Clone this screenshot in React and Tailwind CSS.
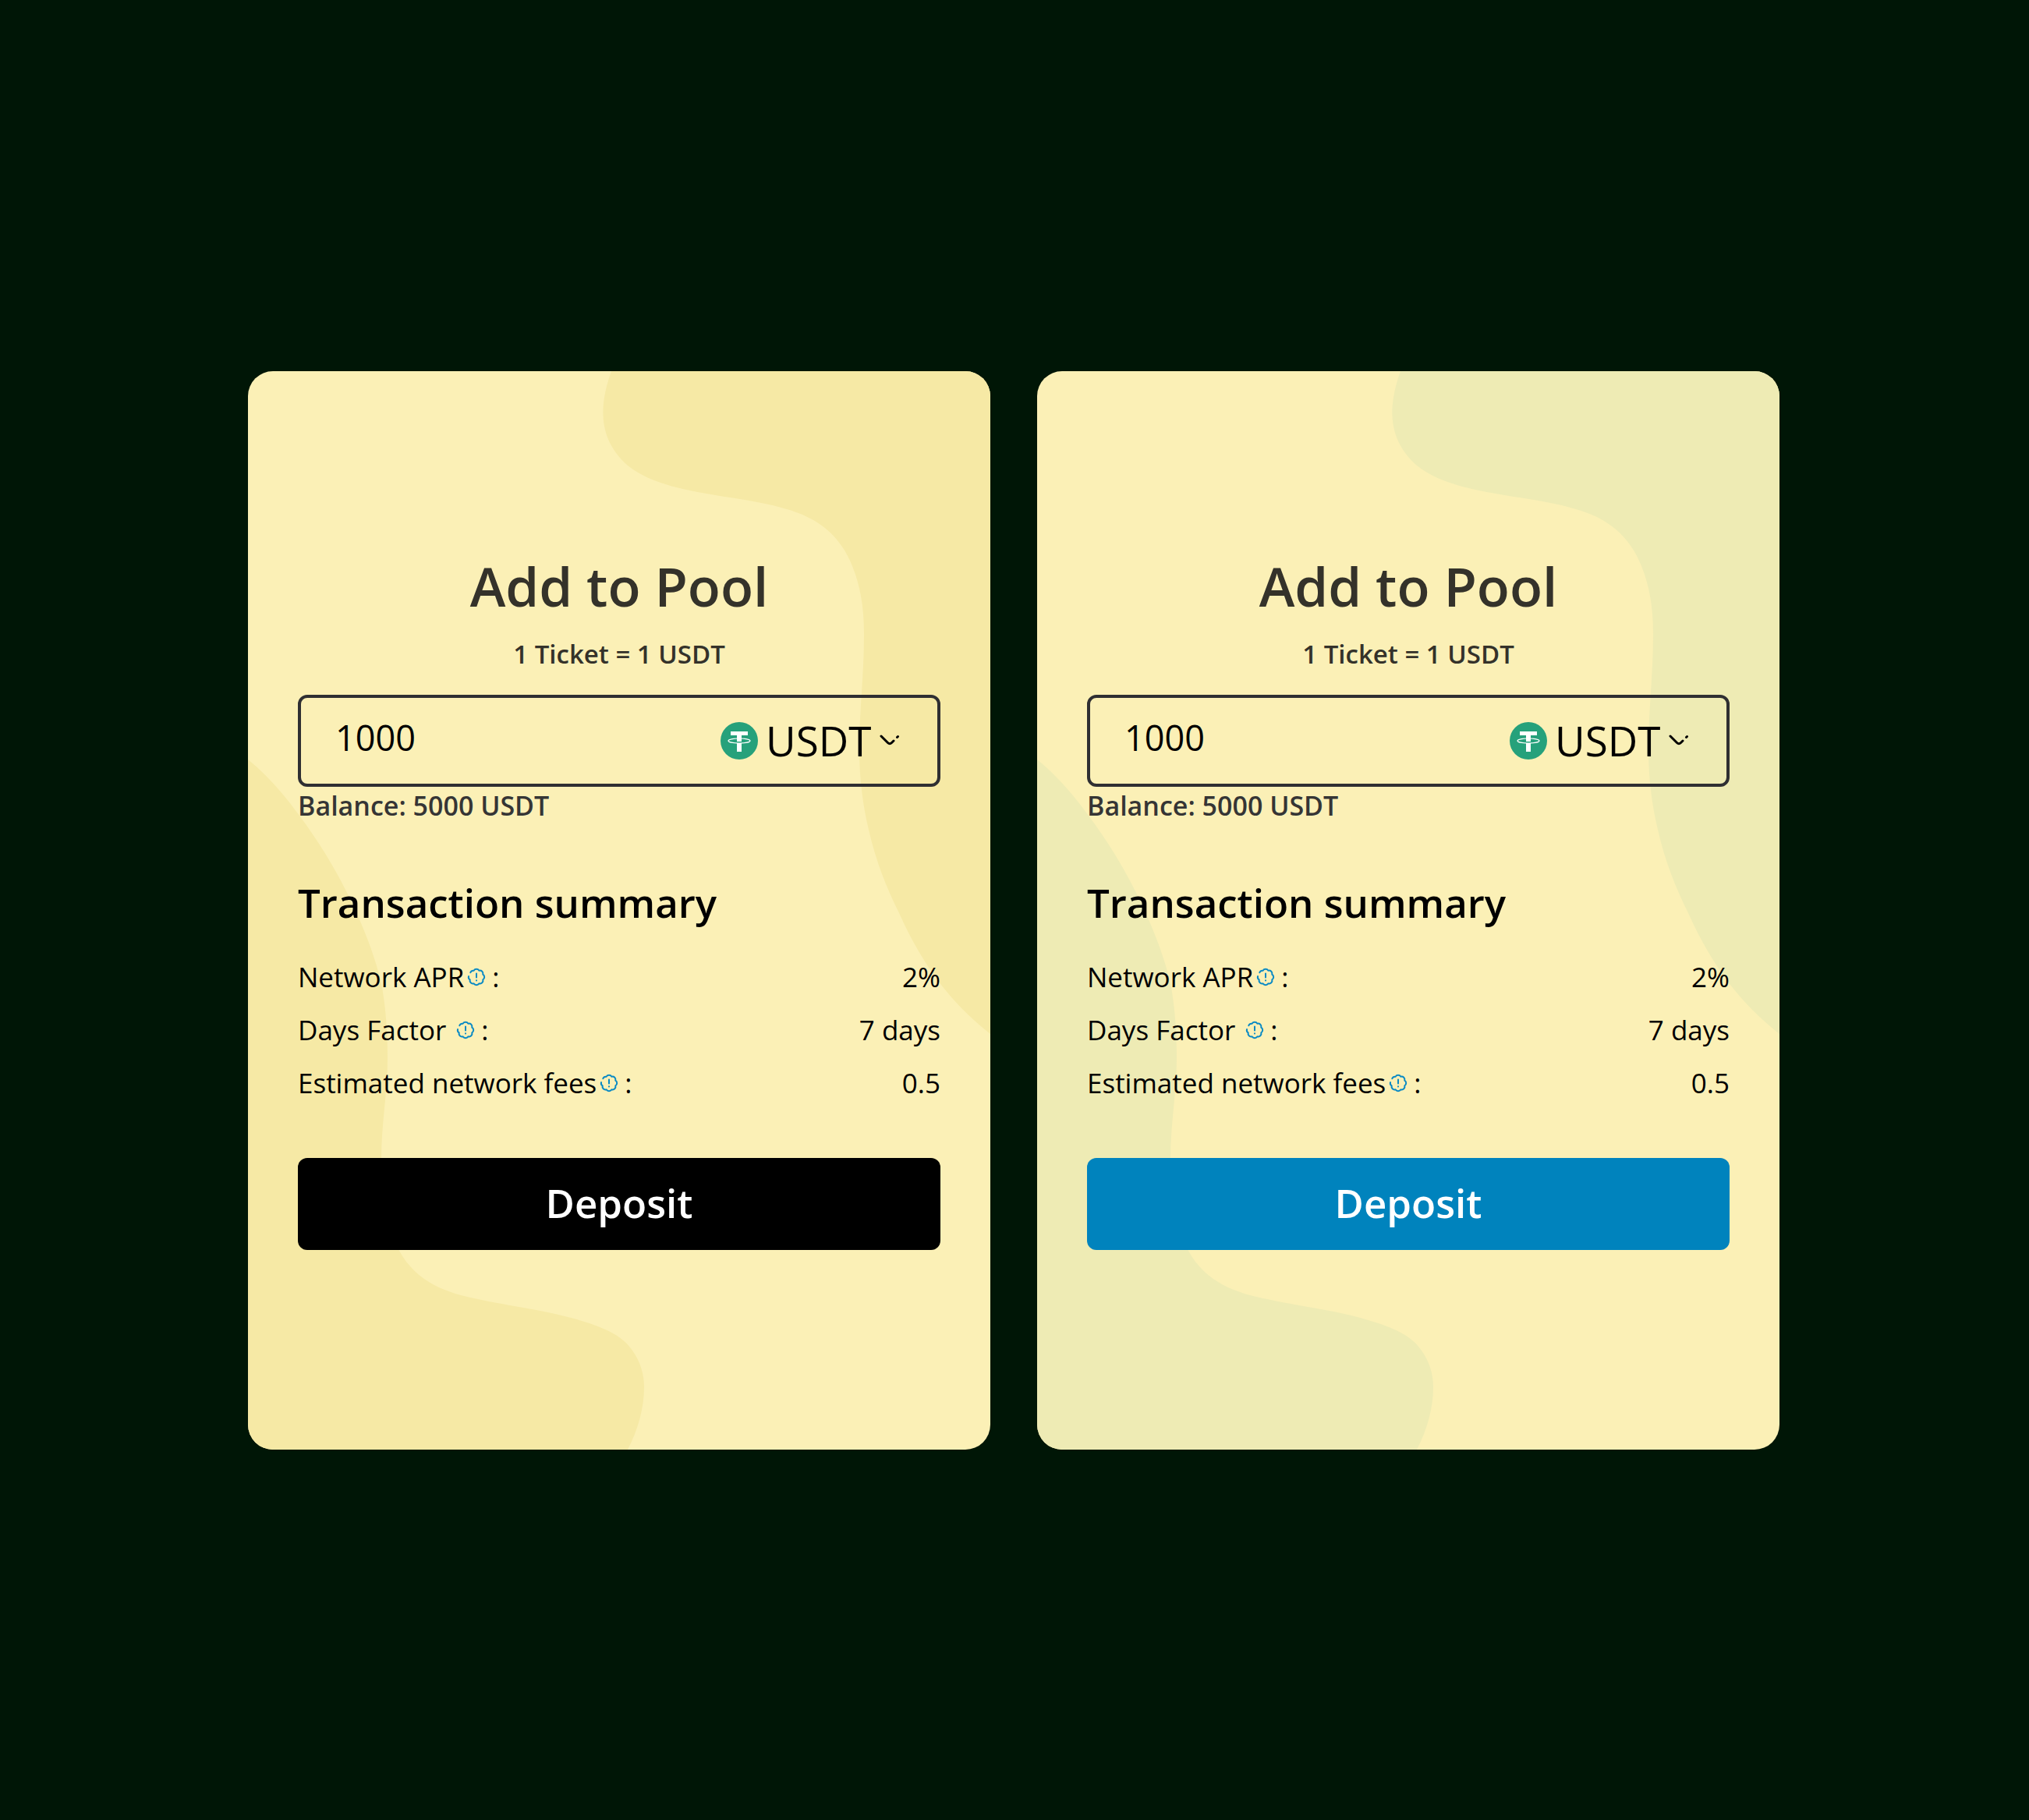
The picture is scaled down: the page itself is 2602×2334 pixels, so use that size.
import React, { useState } from 'react';

const themes = {
  gold: { blob: 'text-[#f6e9a5]', button: 'bg-black' },
  ocean: { blob: 'text-[#eeebb4]', button: 'bg-[#0083bd]' },
};

const summary = [
  { label: 'Network APR', value: '2%' },
  { label: 'Days Factor ', value: '7 days' },
  { label: 'Estimated network fees', value: '0.5' },
];

function Blobs({ className }) {
  return (
    <svg
      viewBox="0 0 952 1383"
      preserveAspectRatio="none"
      fill="currentColor"
      aria-hidden="true"
      className={`absolute inset-0 w-full h-full ${className}`}
    >
      <path d="M466 0C449 47 450 88 487 121C518 146 565 153 611 161C640 165 668 170 691 177C712 183 728 191 741 202C757 215 768 232 775 250C786 277 790 305 790 338C790 390 784 435 784 485C784 520 788 555 796 588C805 627 818 661 836 697C850 728 865 754 883 779C905 809 928 831 952 850V0Z" />
      <path d="M0 498C27 520 46 543 66 570C90 602 110 635 125 665C147 708 165 755 172 790C177 820 179 848 179 881C179 925 171 965 171 1010C171 1055 177 1097 194 1128C205 1148 220 1162 239 1172C256 1181 275 1186 295 1190C322 1196 350 1200 375 1205C405 1211 433 1218 456 1228C473 1235 485 1244 493 1256C503 1270 508 1286 508 1303C508 1330 500 1358 487 1383H0Z" />
    </svg>
  );
}

function TetherIcon() {
  return (
    <svg viewBox="0 0 48 48" aria-hidden="true" className="w-12 h-12 shrink-0">
      <circle cx="24" cy="24" r="24" fill="#26a17b" />
      <path d="M13 12H35V17H27V25H21V17H13ZM21 27H27V38H21Z" fill="#fff" />
      <ellipse cx="24" cy="24" rx="14" ry="3" fill="none" stroke="#fff" strokeWidth="1.2" />
    </svg>
  );
}

function ChevronIcon() {
  return (
    <svg
      viewBox="0 0 26 16"
      fill="none"
      stroke="#000"
      strokeWidth="3"
      strokeLinecap="round"
      strokeLinejoin="round"
      aria-hidden="true"
      className="w-[26px] h-4 shrink-0"
    >
      <path d="M2 2L10.500 10.500Q13 13 15.500 10.500L18 8M22.500 3.500L23.500 2.500" />
    </svg>
  );
}

function InfoIcon() {
  return (
    <svg
      viewBox="0 0 24 24"
      fill="none"
      stroke="#0a8ac4"
      strokeWidth="2"
      strokeLinecap="round"
      strokeLinejoin="round"
      aria-hidden="true"
      className="w-6 h-6"
    >
      <path d="M4.300 6.200A4 4 0 0 1 8.600 3.700A4 4 0 0 1 15.400 3.700A4 4 0 0 1 20.300 8.600A4 4 0 0 1 20.300 15.400A4 4 0 0 1 15.400 20.300A4 4 0 0 1 8.600 20.300A4 4 0 0 1 3.700 15.400A4 4 0 0 1 2 11" />
      <path d="M12 7.500V12.500M12 16.300V16.400" />
    </svg>
  );
}

function PoolCard({ theme }) {
  const [amount, setAmount] = useState('1000');
  const [token, setToken] = useState('USDT');

  return (
    <section className="relative flex-1 overflow-hidden rounded-[32px] bg-[#fbf0b6]">
      <Blobs className={theme.blob} />

      <div className="relative px-16 pt-[231px] pb-64">
        <h1 className="text-center text-[69px] leading-[88px] font-semibold text-[#34322a]">Add to Pool</h1>
        <p className="mt-5 text-center text-[33px] leading-12 font-semibold text-[#34322a]">1 Ticket = 1 USDT</p>

        {/* Amount */}
        <div className="mt-7 flex h-[118px] items-center justify-between rounded-xl border-4 border-[#2f2f32] pl-11 pr-12">
          <input
            type="text"
            inputMode="decimal"
            aria-label="Amount"
            value={amount}
            onChange={(e) => setAmount(e.target.value)}
            className="min-w-0 flex-1 bg-transparent pb-2 text-[45px] leading-16 text-black outline-none"
          />
          <div className="flex items-center gap-2.5">
            <TetherIcon />
            <select
              aria-label="Token"
              value={token}
              onChange={(e) => setToken(e.target.value)}
              className="h-20 appearance-none bg-transparent text-[53px] leading-20 text-black outline-none"
            >
              <option value="USDT">USDT</option>
            </select>
            <ChevronIcon />
          </div>
        </div>
        <p className="text-[34px] leading-12 font-semibold text-[#353535]">Balance: 5000 USDT</p>

        {/* Summary */}
        <h2 className="mt-16 text-[51px] leading-[72px] font-semibold text-black">Transaction summary</h2>
        <dl className="mt-9 flex flex-col gap-5">
          {summary.map((row) => (
            <div key={row.label} className="flex items-center justify-between text-[35px] leading-12 text-black">
              <dt className="flex items-center whitespace-pre">
                {row.label}
                <span className="ml-1 mr-2">
                  <InfoIcon />
                </span>
                :
              </dt>
              <dd>{row.value}</dd>
            </div>
          ))}
        </dl>

        <button
          type="button"
          className={`mt-18 h-[118px] w-full rounded-xl pb-1 text-[51px] leading-16 font-semibold text-white ${theme.button}`}
        >
          Deposit
        </button>
      </div>
    </section>
  );
}

export default function App() {
  return (
    <main className="flex min-h-screen items-center bg-[#001606] pl-[318px] pr-80 font-['Open_Sans',sans-serif]">
      <div className="flex w-full gap-[60px]">
        <PoolCard theme={themes.gold} />
        <PoolCard theme={themes.ocean} />
      </div>
    </main>
  );
}
